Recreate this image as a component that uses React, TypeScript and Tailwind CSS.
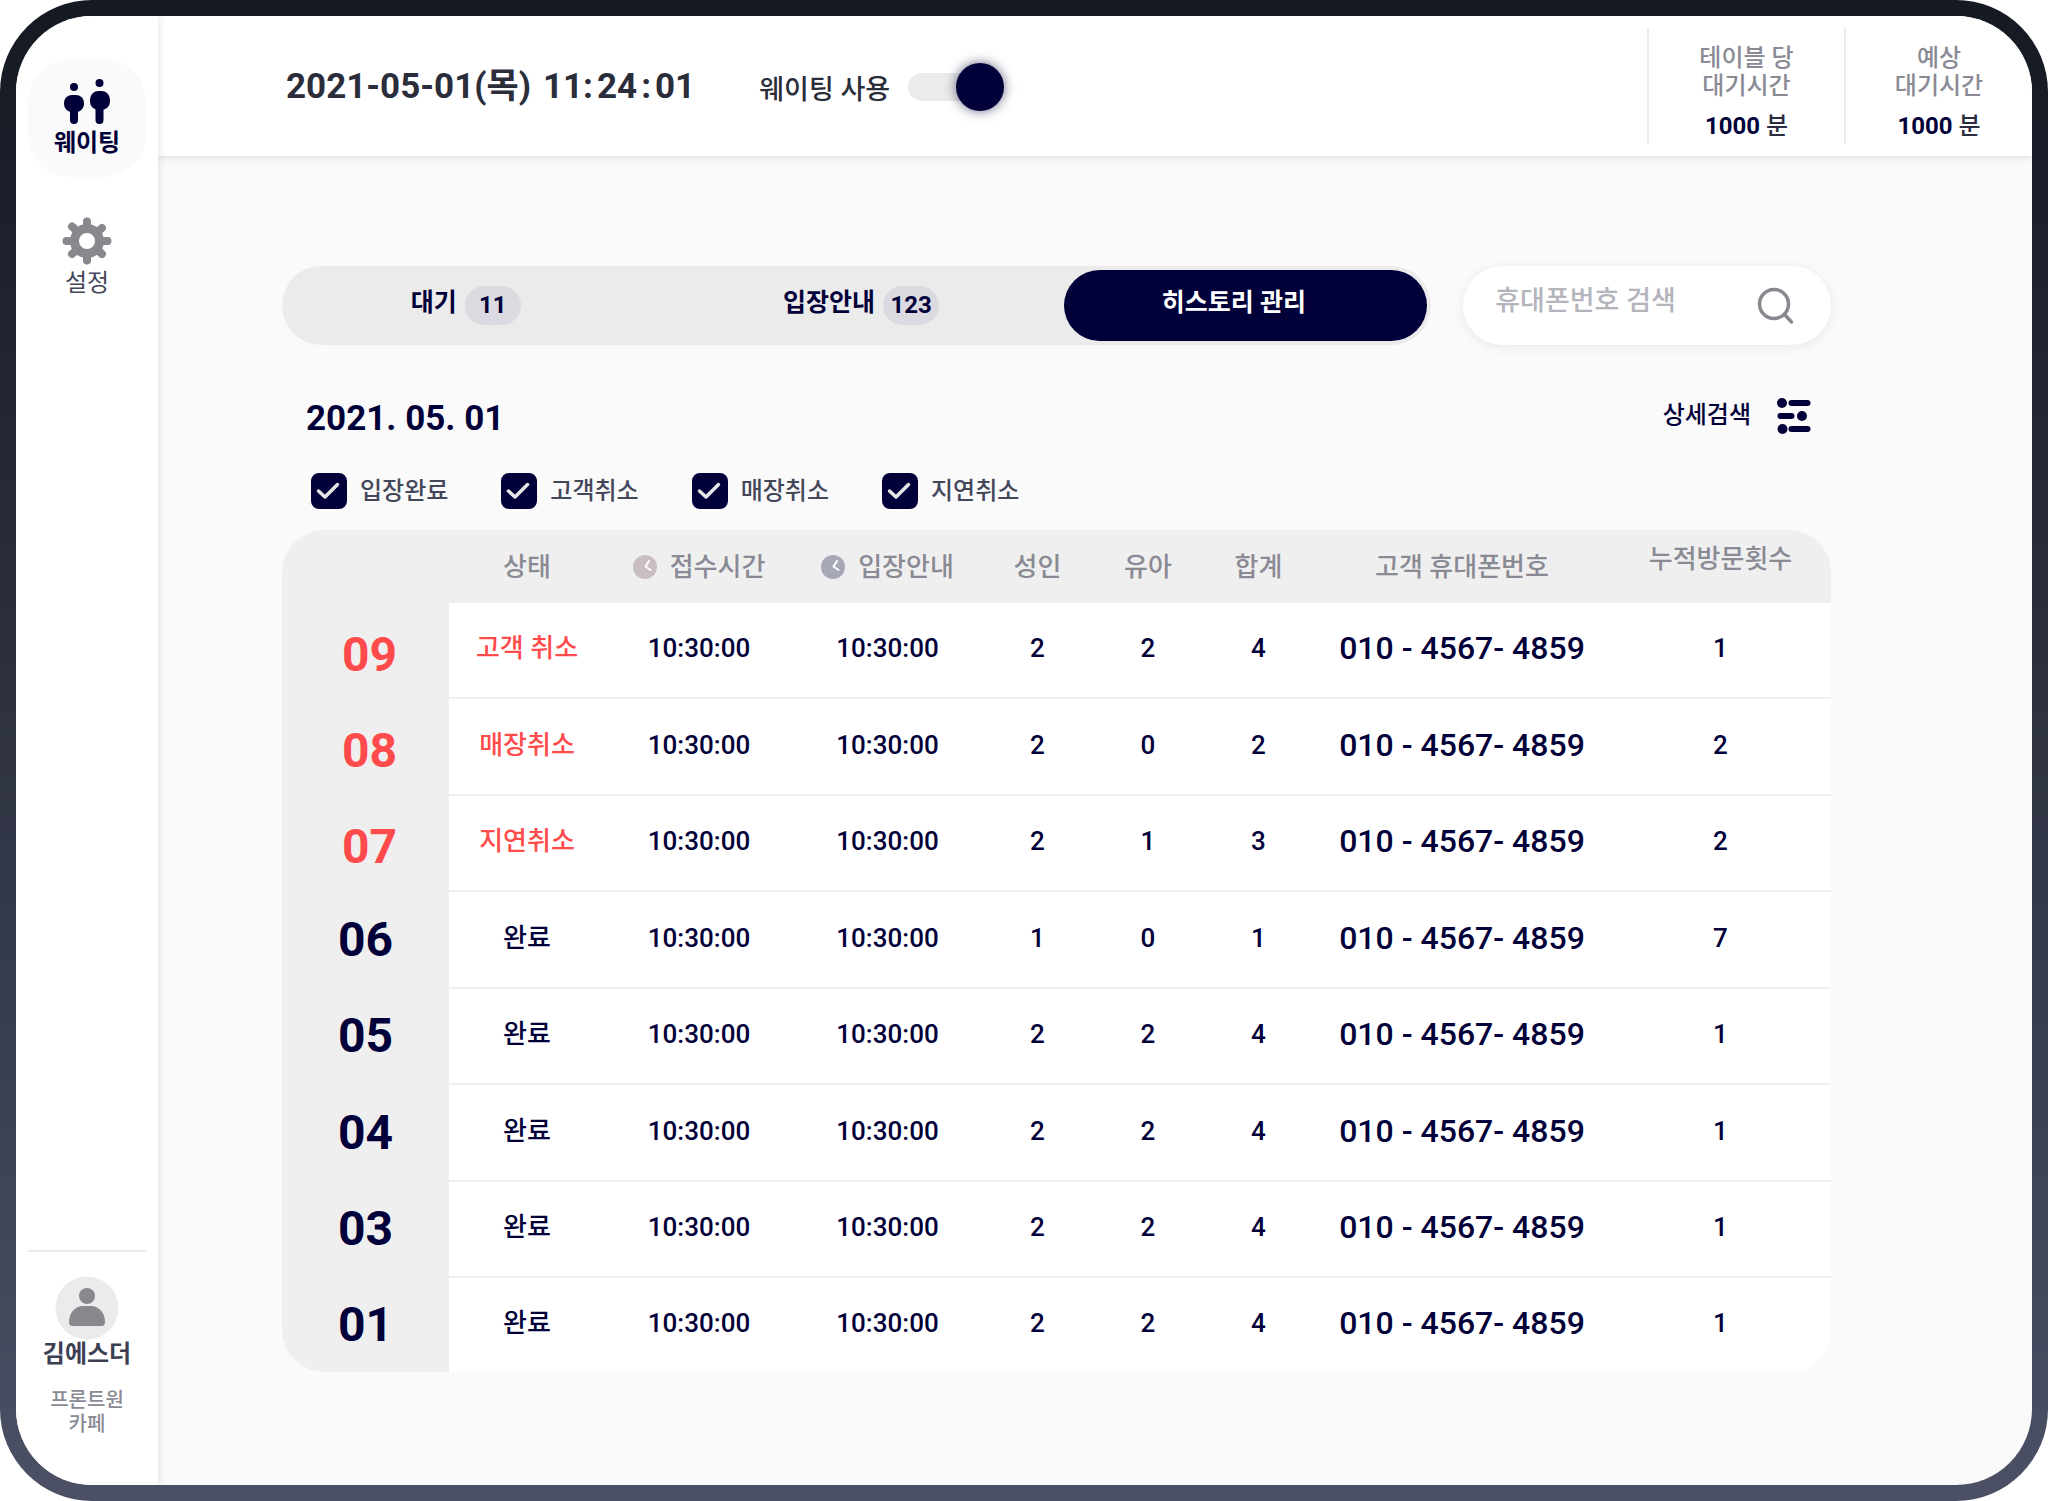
import { useState } from "react";

interface IWaiting {
  no: string;
  status: string;
  canceled: boolean;
  adult: number;
  child: number;
  total: number;
  visits: number;
}

const tabs = [
  { name: "대기", count: 11, style: "pr-6" },
  { name: "입장안내", count: 123, style: "pr-4" },
  { name: "히스토리 관리", style: "pr-6" },
];

const filters = ["입장완료", "고객취소", "매장취소", "지연취소"];

const waitings: IWaiting[] = [
  { no: "09", status: "고객 취소", canceled: true, adult: 2, child: 2, total: 4, visits: 1 },
  { no: "08", status: "매장취소", canceled: true, adult: 2, child: 0, total: 2, visits: 2 },
  { no: "07", status: "지연취소", canceled: true, adult: 2, child: 1, total: 3, visits: 2 },
  { no: "06", status: "완료", canceled: false, adult: 1, child: 0, total: 1, visits: 7 },
  { no: "05", status: "완료", canceled: false, adult: 2, child: 2, total: 4, visits: 1 },
  { no: "04", status: "완료", canceled: false, adult: 2, child: 2, total: 4, visits: 1 },
  { no: "03", status: "완료", canceled: false, adult: 2, child: 2, total: 4, visits: 1 },
  { no: "01", status: "완료", canceled: false, adult: 2, child: 2, total: 4, visits: 1 },
];

const PeopleIcon = () => (
  <svg width="46" height="46" viewBox="0 0 46 46" fill="#020038" aria-hidden="true">
    <circle cx="10" cy="8" r="4" />
    <rect x="0" y="16" width="20" height="17" rx="8" />
    <rect x="6" y="24" width="8" height="21" rx="4" />
    <circle cx="35.500" cy="4" r="4" />
    <rect x="26" y="12" width="20" height="19" rx="8.500" />
    <rect x="31.500" y="22" width="8" height="23" rx="4" />
  </svg>
);

const GearIcon = () => (
  <svg width="50" height="48" viewBox="-25 -24 50 48" aria-hidden="true">
    <g stroke="#8a888e" strokeWidth="8" strokeLinecap="round">
      <path d="M0 -19.500V19.500M-20.500 0H20.500M-15 -14.500L15 13M15 -13L-15 13" />
    </g>
    <circle r="12.500" fill="#fff" stroke="#8a888e" strokeWidth="9" />
  </svg>
);

const UserIcon = () => (
  <svg width="64" height="64" viewBox="0 0 64 64" aria-hidden="true">
    <circle cx="32" cy="32" r="31.500" fill="#ebebeb" />
    <circle cx="32" cy="20" r="8" fill="#8a888e" />
    <path
      d="M14 46C14 36 21 30 28 30H36C43 30 50 36 50 46Q50 50 46.500 50H17.500Q14 50 14 46Z"
      fill="#8a888e"
    />
  </svg>
);

const SearchIcon = () => (
  <svg width="38" height="38" viewBox="0 0 38 38" fill="none" stroke="#8a888e" strokeWidth="3.500" strokeLinecap="round" aria-hidden="true">
    <circle cx="17" cy="17" r="14.500" />
    <path d="M28 28L34.500 35" />
  </svg>
);

const FilterIcon = () => (
  <svg width="34" height="38" viewBox="0 -2 34 38" fill="#020038" aria-hidden="true">
    <circle cx="5" cy="5" r="5" />
    <rect x="11.500" y="2" width="22" height="6" rx="3" />
    <rect x="0.500" y="15" width="17" height="6" rx="3" />
    <circle cx="25" cy="18" r="5" />
    <circle cx="5.500" cy="31" r="5" />
    <rect x="11.500" y="28" width="22" height="6" rx="3" />
  </svg>
);

const ClockIcon = ({ fill }: { fill: string }) => (
  <svg width="24" height="24" viewBox="0 0 24 24" fill="none" aria-hidden="true">
    <circle cx="12" cy="12" r="12" fill={fill} />
    <path d="M16 6L12.500 11.500L17.500 15" stroke="#fff" strokeWidth="2" strokeLinecap="round" strokeLinejoin="round" />
  </svg>
);

const Sidebar = () => (
  <aside className="relative z-10 flex w-[142px] shrink-0 flex-col items-center bg-white pt-[43px] shadow-[1px_0_8px_rgba(0,0,0,0.1)]">
    <nav className="flex flex-col items-center">
      <a
        href="#waiting"
        className="flex size-[118px] flex-col items-center rounded-[42px] bg-[#fafafa] pt-5 text-2xl leading-9 font-bold text-[#020038]"
      >
        <PeopleIcon />
        웨이팅
      </a>
      <a
        href="#settings"
        className="mt-10 flex flex-col items-center text-2xl leading-9 text-[#44465a]"
      >
        <GearIcon />
        설정
      </a>
    </nav>

    <div className="mt-auto mb-[49px] flex w-[118px] flex-col items-center border-t-2 border-[#ebebeb] pt-6">
      <UserIcon />
      <p className="text-2xl leading-7 font-bold text-[#3c3e52]">김에스더</p>
      <p className="mt-5 text-center text-xl leading-6 font-medium text-[#8a8a94]">
        프론트원
        <br />
        카페
      </p>
    </div>
  </aside>
);

const WaitTime = ({ name }: { name: string }) => (
  <div className="flex h-[116px] w-[197px] flex-col items-center border-l-2 border-[#ebebeb] pt-4 text-center text-2xl leading-7 font-medium text-[#8a8a94] last:w-[188px]">
    <p>{name}</p>
    <p>대기시간</p>
    <p className="mt-2 leading-9 text-[#2b2d3f]">
      <span className="font-bold text-[#020038]">1000</span> 분
    </p>
  </div>
);

const Header = () => {
  const [enabled, setEnabled] = useState(true);

  return (
    <header className="relative flex h-[140px] items-center bg-white pl-[128px] shadow-[0_2px_8px_rgba(0,0,0,0.1)]">
      <h1 className="flex gap-1 pt-0.5 text-[35px] leading-10 font-bold text-[#2b2d3a]">
        <span className="mr-2">2021-05-01(목)</span>
        <span>11:</span>
        <span>24</span>
        <span>:</span>
        <span>01</span>
      </h1>

      <label className="ml-16 flex items-center pt-0.5 text-[27px] leading-10 font-medium text-[#2b2d3a]">
        <span className="pt-1.5">웨이팅 사용</span>
        <span className="relative ml-[18px] flex h-12 w-24 items-center">
          <input
            type="checkbox"
            role="switch"
            checked={enabled}
            onChange={() => setEnabled(!enabled)}
            className="peer h-7 w-20 appearance-none rounded-full bg-[#ebebeb]"
          />
          <span className="pointer-events-none absolute left-0 size-12 rounded-full bg-[#020038] shadow-[0_0_12px_rgba(2,0,56,0.6)] peer-checked:right-0 peer-checked:left-auto" />
        </span>
      </label>

      <div className="ml-auto flex">
        <WaitTime name="테이블 당" />
        <WaitTime name="예상" />
      </div>
    </header>
  );
};

const Tabs = () => {
  const [active, setActive] = useState(2);

  return (
    <div
      role="tablist"
      className="grid grid-cols-[392fr_391fr_363fr] rounded-full bg-[#ebebeb] py-1 pr-1"
    >
      {tabs.map((tab, idx) => (
        <button
          key={idx}
          role="tab"
          aria-selected={active === idx}
          onClick={() => setActive(idx)}
          className={`flex h-[71px] items-center justify-center gap-2 rounded-full text-[25px] leading-10 font-bold ${tab.style} ${
            active === idx ? "bg-[#020038] text-white" : "text-[#020038]"
          }`}
        >
          <span className="pb-1.5">{tab.name}</span>
          {tab.count && (
            <span className="w-14 rounded-full bg-[#dadae0] text-center text-2xl leading-[39px]">
              {tab.count}
            </span>
          )}
        </button>
      ))}
    </div>
  );
};

const HistoryTable = () => (
  <div className="mt-[21px] overflow-hidden rounded-[42px]">
    <table className="w-full table-fixed bg-white text-center text-[26px] leading-9 text-[#020038]">
      <colgroup>
        <col className="w-[167px]" />
        <col className="w-[156px]" />
        <col className="w-[188px]" />
        <col className="w-[189px]" />
        <col className="w-[111px]" />
        <col className="w-[110px]" />
        <col className="w-[111px]" />
        <col className="w-[296px]" />
        <col className="w-[221px]" />
      </colgroup>
      <thead className="bg-[#efefef] text-[#8a8a94]">
        <tr className="h-[73px] *:font-medium">
          <td />
          <th>상태</th>
          <th>
            <span className="flex items-center justify-center gap-[13px]">
              <ClockIcon fill="#c9bfc3" />
              접수시간
            </span>
          </th>
          <th>
            <span className="flex items-center justify-center gap-[13px]">
              <ClockIcon fill="#a6a8b8" />
              입장안내
            </span>
          </th>
          <th>성인</th>
          <th>유아</th>
          <th>합계</th>
          <th>고객 휴대폰번호</th>
          <th className="pb-4">누적방문횟수</th>
        </tr>
      </thead>
      <tbody>
        {waitings.map((item) => (
          <tr
            key={item.no}
            className="h-24 font-medium first:h-[95px] even:not-last:h-[97px] last:h-[95px] *:not-first:border-b-2 *:not-first:border-[#efefef] *:not-first:pb-1 last:*:border-b-0"
          >
            <th
              className={`bg-[#efefef] text-5xl font-bold ${
                item.canceled ? "pt-2 pl-2 text-[#ff4b4b]" : ""
              }`}
            >
              {item.no}
            </th>
            <td className={item.canceled ? "text-[#ff4b4b]" : ""}>
              {item.status}
            </td>
            <td>10:30:00</td>
            <td>10:30:00</td>
            <td>{item.adult}</td>
            <td>{item.child}</td>
            <td>{item.total}</td>
            <td className="text-[32px]">010 - 4567- 4859</td>
            <td>{item.visits}</td>
          </tr>
        ))}
      </tbody>
    </table>
  </div>
);

const App = () => {
  return (
    <div className="flex min-h-screen rounded-[92px] bg-linear-to-b from-[#151922] to-[#4b5065] p-4 font-[Roboto,'Noto_Sans_CJK_KR',sans-serif]">
      <div className="flex flex-1 overflow-hidden rounded-[76px] bg-[#fafafa]">
        <Sidebar />

        <div className="min-w-0 flex-1">
          <Header />

          <main className="pt-[110px] pr-[201px] pl-[124px]">
            <div className="grid grid-cols-[1150fr_368fr] gap-8">
              <Tabs />
              <label className="flex min-w-0 items-center rounded-full bg-white pr-9 pl-8 shadow-[0_2px_12px_rgba(0,0,0,0.08)]">
                <input
                  type="search"
                  aria-label="휴대폰번호 검색"
                  placeholder="휴대폰번호 검색"
                  className="mb-2.5 min-w-0 flex-1 text-[27px] leading-10 font-medium outline-none placeholder:text-[#b4b4bc]"
                />
                <SearchIcon />
              </label>
            </div>

            <div className="mt-[50px] flex items-start justify-between pr-5 pl-6">
              <h2 className="pt-1 text-[35px] leading-10 font-bold text-[#020038]">
                2021. 05. 01
              </h2>
              <button className="flex items-center gap-[26px] text-2xl leading-10 font-medium text-[#020038]">
                상세검색
                <FilterIcon />
              </button>
            </div>

            <div className="mt-[34px] flex gap-[53px] pl-[29px]">
              {filters.map((name) => (
                <label
                  key={name}
                  className="flex items-center gap-[13px] text-2xl leading-9 font-medium text-[#44465a]"
                >
                  <span className="relative flex">
                    <input
                      type="checkbox"
                      defaultChecked
                      className="peer size-9 appearance-none rounded-lg border-2 border-[#020038] checked:bg-[#020038]"
                    />
                    <svg
                      viewBox="0 0 36 36"
                      className="pointer-events-none absolute inset-0 hidden peer-checked:block"
                      fill="none"
                      stroke="#e6e6e6"
                      strokeWidth="3.500"
                      strokeLinecap="round"
                      strokeLinejoin="round"
                      aria-hidden="true"
                    >
                      <path d="M7.500 18L14 24L26.500 11.500" />
                    </svg>
                  </span>
                  {name}
                </label>
              ))}
            </div>

            <HistoryTable />
          </main>
        </div>
      </div>
    </div>
  );
};

export default App;
